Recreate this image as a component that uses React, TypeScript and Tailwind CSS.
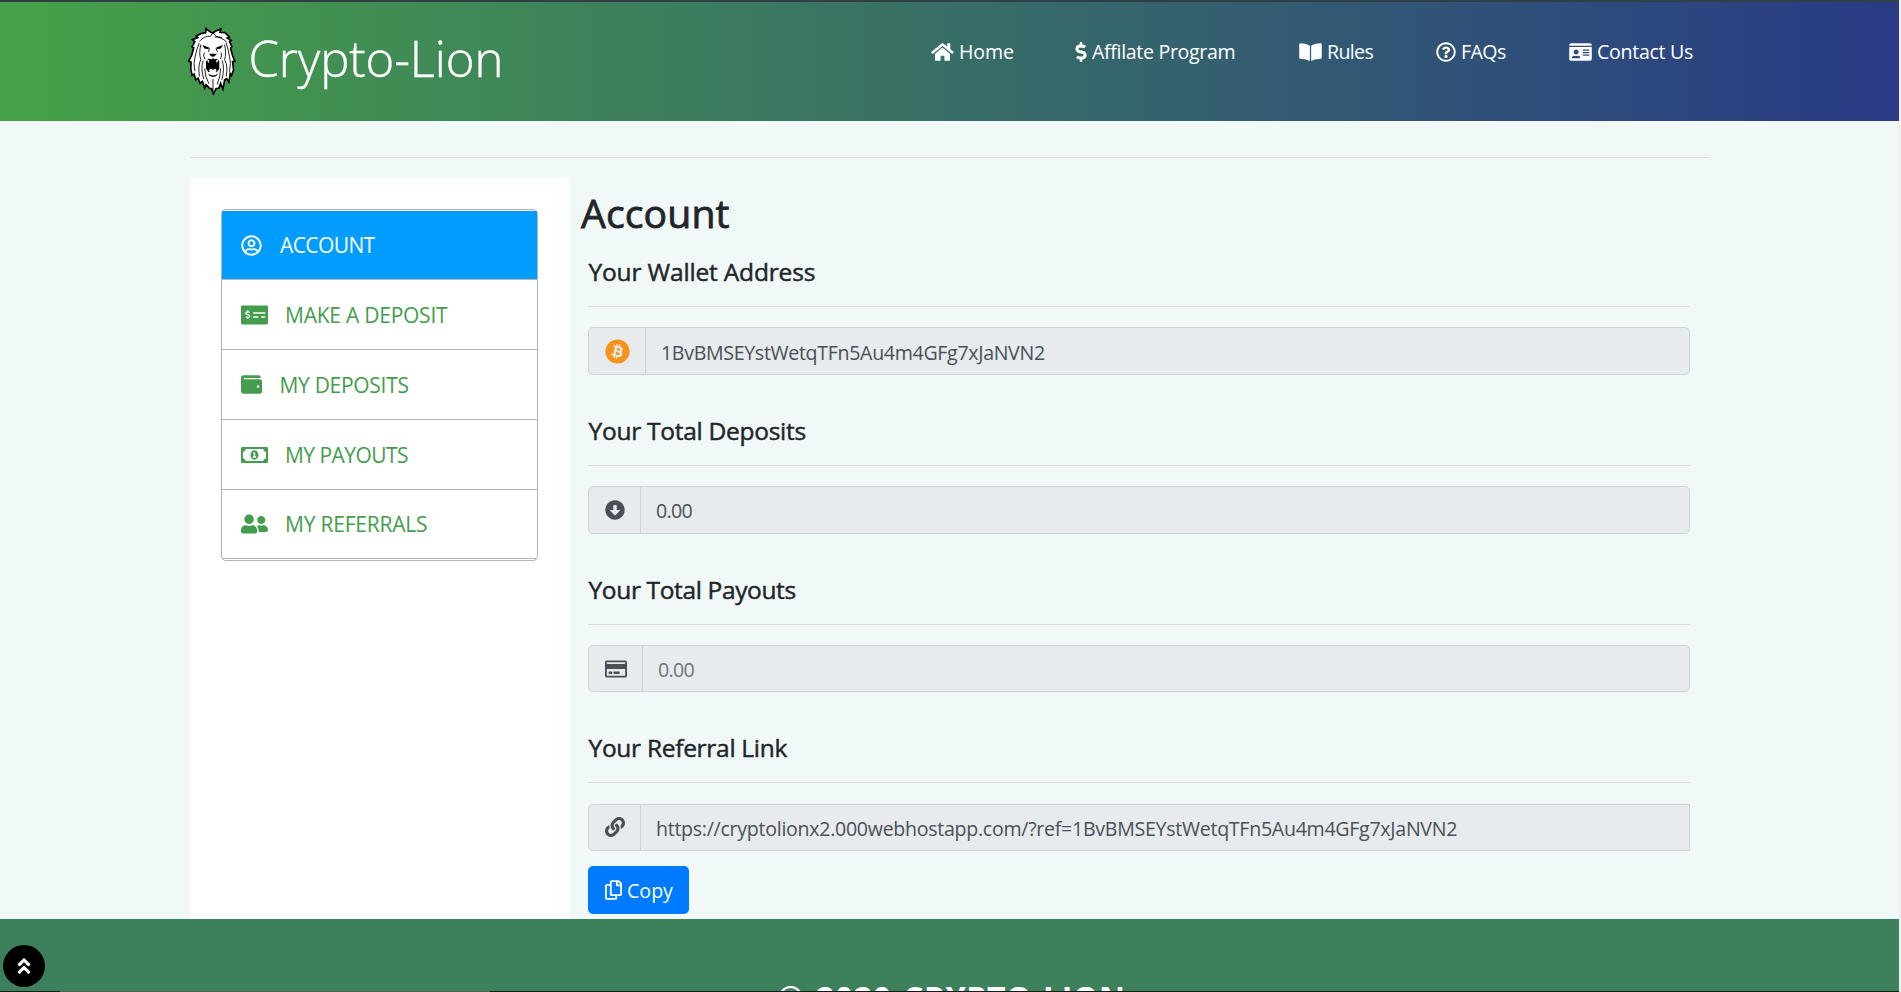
import type { ReactNode } from "react";
import {
  FaHome,
  FaDollarSign,
  FaBookOpen,
  FaRegQuestionCircle,
  FaIdCard,
  FaRegUserCircle,
  FaMoneyCheckAlt,
  FaWallet,
  FaRegMoneyBillAlt,
  FaUserFriends,
  FaBitcoin,
  FaArrowAltCircleDown,
  FaRegCreditCard,
  FaLink,
  FaRegCopy,
  FaAngleDoubleUp,
} from "react-icons/fa";

function LionLogo() {
  return (
    <svg viewBox="20 20 150 205" className="h-[68px] w-[50px] shrink-0" aria-hidden="true">
      <path
        d="M77 25 L90 35 L98 38 L105 33 L122 26 L119 36 L134 37 L147 50 L141 53 L153 60 L148 64 L155 80 L151 84 L157 106 L164 124 L157 124 L160 150 L154 166 L150 160 L146 186 L139 176 L133 180 L128 207 L121 190 L116 204 L107 206 L99 222 L94 206 L88 205 L77 194 L73 204 L66 184 L59 190 L53 174 L46 180 L41 162 L35 166 L31 146 L32 126 L25 124 L34 104 L40 82 L35 80 L43 64 L36 58 L52 52 L47 47 L62 40 L76 37 Z"
        fill="#fff"
        stroke="#000"
        strokeWidth="5"
        strokeLinejoin="miter"
      />
      <g fill="none" stroke="#000" strokeWidth="2.6" strokeLinecap="round">
        <path d="M97 38 L92 46 M99 38 L108 48 L124 52" />
        <path d="M90 48 Q72 46 58 62 M104 50 Q124 50 138 64" />
        <path d="M56 70 Q48 88 44 110 Q38 128 43 152" />
        <path d="M138 68 Q144 88 148 110 Q153 128 148 154" />
        <path d="M61 74 Q55 100 61 118 Q52 138 57 168" />
        <path d="M133 74 Q139 100 133 118 Q144 138 138 168" />
        <path d="M68 122 Q60 146 70 176 M126 122 Q134 146 125 178" />
        <path d="M73 146 Q73 168 85 190 M121 146 Q121 168 111 192" />
        <path d="M98 178 V212" />
        <path d="M71 98 Q68 108 73 116 M123 98 Q126 108 121 116" />
        <path d="M87 84 L85 94 M107 84 L111 94" />
      </g>
      <path d="M66 74 L86 82 L84 87 L72 85 Z M128 74 L108 82 L110 87 L122 85 Z" fill="#000" />
      <path d="M86 101 H110 L103 108 L98 110 L92 108 Z" fill="#000" />
      <path d="M98 110 L96 117 L84 116 L77 123 L77 146 L84 156 H110 L117 146 V123 L110 116 L100 117 Z" fill="#000" />
      <path d="M80 118 L84 130 L87 120 Z M114 118 L110 130 L107 120 Z" fill="#fff" />
      <path d="M86 152 L89 146 L98 149 L106 146 L109 152 L105 159 H91 Z" fill="#fff" />
      <path d="M83 160 Q98 173 113 160 L109 167 Q98 174 87 167 Z" fill="#000" />
    </svg>
  );
}

function NavItem({ icon, label, className }: { icon: ReactNode; label: string; className: string }) {
  return (
    <a className="flex h-7 items-center gap-[5px] text-[19.6px] leading-7 whitespace-nowrap text-white">
      {icon}
      <span className={className}>{label}</span>
    </a>
  );
}

function MenuItem({
  icon,
  label,
  className,
  textClass,
}: {
  icon: ReactNode;
  label: string;
  className: string;
  textClass: string;
}) {
  return (
    <li className={`flex items-center border-b border-[#b5b5b5] pl-[19px] text-[21px] ${className}`}>
      {icon}
      <span className={`pt-0.5 whitespace-nowrap ${textClass}`}>{label}</span>
    </li>
  );
}

function Field({
  title,
  titleClass,
  icon,
  addonClass,
  value,
  valueClass,
  boxClass,
  className,
}: {
  title: string;
  titleClass: string;
  icon: ReactNode;
  addonClass: string;
  value: string;
  valueClass: string;
  boxClass: string;
  className: string;
}) {
  return (
    <section className={className}>
      <h4
        className={`h-[51px] pl-[0.5px] text-[24.5px] leading-[34px] whitespace-nowrap text-[#212529] [-webkit-text-stroke:0.45px_#212529] ${titleClass}`}
      >
        {title}
      </h4>
      <hr className="border-[#d7dddf]" />
      <div className={`flex border border-[#ced4da] bg-[#e8ebee] ${boxClass}`}>
        <div className={`flex items-center border-r border-[#ced4da] pl-4 text-[#495057] ${addonClass}`}>{icon}</div>
        <span className={`pl-[15px] text-[19.6px] whitespace-nowrap ${valueClass}`}>{value}</span>
      </div>
    </section>
  );
}

export default function App() {
  return (
    <div className="flex h-[992px] w-[1901px] overflow-hidden bg-[#f0f0f5] font-['Open_Sans','Noto_Sans',sans-serif]">
      <div className="flex w-[1899px] flex-col bg-[#f1f8f8]">
        <header className="flex h-[121px] shrink-0 border-t-2 border-[#2f3f45] bg-linear-to-r/srgb from-[#46a247] to-[#293a86]">
          <div className="flex w-[931px] pt-[25px] pl-[187px]">
            <LionLogo />
            <span className="pl-[11.5px] text-[49px] leading-[62px] font-light tracking-[-0.1px] whitespace-nowrap text-white [-webkit-text-stroke:0.4px_white]">
              Crypto-Lion
            </span>
          </div>
          <nav className="flex pt-9">
            <div className="w-36">
              <NavItem icon={<FaHome className="h-5 w-[23px]" />} label="Home" className="tracking-[-0.1px]" />
            </div>
            <div className="w-[224px]">
              <NavItem
                icon={<FaDollarSign className="h-5 w-[12px]" />}
                label="Affilate Program"
                className="tracking-[-0.33px]"
              />
            </div>
            <div className="w-[137px]">
              <NavItem icon={<FaBookOpen className="h-5 w-[23px]" />} label="Rules" className="tracking-[-0.65px]" />
            </div>
            <div className="w-[133px]">
              <NavItem icon={<FaRegQuestionCircle className="size-5" />} label="FAQs" className="tracking-[-0.6px]" />
            </div>
            <NavItem icon={<FaIdCard className="h-5 w-[23px]" />} label="Contact Us" className="tracking-[-0.31px]" />
          </nav>
        </header>

        <div className="ml-[190px] w-[1519px] flex-1 pt-9">
          <hr className="border-[#d7dddf]" />
          <div className="mt-5 flex h-[741px]">
            <aside className="w-[380px] bg-white px-[31px] pt-[31px]">
              <ul className="h-[352px] w-[317px] rounded-[5px] border border-[#b5b5b5] pt-px text-[#439d4c]">
                <MenuItem
                  icon={<FaRegUserCircle className="size-[21px]" />}
                  label="ACCOUNT"
                  className="h-[69px] bg-[#009dff] text-white"
                  textClass="pl-[18px] tracking-[-0.6px]"
                />
                <MenuItem
                  icon={<FaMoneyCheckAlt className="h-[22px] w-[27px]" />}
                  label="MAKE A DEPOSIT"
                  className="h-[70px]"
                  textClass="pl-[17px] tracking-[-0.24px]"
                />
                <MenuItem
                  icon={<FaWallet className="size-[21px]" />}
                  label="MY DEPOSITS"
                  className="h-[70px]"
                  textClass="pl-[17.5px] tracking-[-0.3px]"
                />
                <MenuItem
                  icon={<FaRegMoneyBillAlt className="h-[22px] w-[27px]" />}
                  label="MY PAYOUTS"
                  className="h-[70px]"
                  textClass="pl-[17px] tracking-[-0.54px]"
                />
                <MenuItem
                  icon={<FaUserFriends className="h-[22px] w-[27px]" />}
                  label="MY REFERRALS"
                  className="h-[69px]"
                  textClass="pl-[17px] tracking-[-0.21px]"
                />
              </ul>
            </aside>

            <main className="w-[1139px] pl-[11px]">
              <h2 className="h-[77px] pt-[11px] text-[39.2px] leading-12 tracking-[0.1px] text-[#212529] [-webkit-text-stroke:0.8px_#212529]">
                Account
              </h2>
              <div className="w-[1109px] pl-[7px]">
                <Field
                  title="Your Wallet Address"
                  titleClass="tracking-[-0.17px]"
                  icon={<FaBitcoin className="size-[25px] text-[#f7931a]" />}
                  addonClass="w-[57px]"
                  value="1BvBMSEYstWetqTFn5Au4m4GFg7xJaNVN2"
                  valueClass="leading-[49px] tracking-[-0.33px] text-[#495057]"
                  boxClass="mt-5 h-12 rounded-[5px]"
                  className="h-[159px]"
                />
                <Field
                  title="Your Total Deposits"
                  titleClass="tracking-[-0.27px]"
                  icon={<FaArrowAltCircleDown className="size-5" />}
                  addonClass="w-[52px]"
                  value="0.00"
                  valueClass="leading-[47px] tracking-[-0.7px] text-[#495057]"
                  boxClass="mt-5 h-12 rounded-[5px]"
                  className="h-[159px]"
                />
                <Field
                  title="Your Total Payouts"
                  titleClass="tracking-[-0.36px]"
                  icon={<FaRegCreditCard className="h-5 w-[22px]" />}
                  addonClass="w-[54px]"
                  value="0.00"
                  valueClass="leading-[47px] tracking-[-0.7px] text-[#6c757d]"
                  boxClass="mt-5 h-[47px] rounded-[5px]"
                  className="h-[158px]"
                />
                <Field
                  title="Your Referral Link"
                  titleClass="tracking-[-0.29px]"
                  icon={<FaLink className="size-5" />}
                  addonClass="w-[52px] pb-0.5"
                  value="https://cryptolionx2.000webhostapp.com/?ref=1BvBMSEYstWetqTFn5Au4m4GFg7xJaNVN2"
                  valueClass="leading-[47px] tracking-[-0.29px] text-[#495057]"
                  boxClass="mt-[21px] h-[47px] rounded-l-[5px]"
                  className="h-[135px]"
                />
                <button className="flex h-12 w-[101px] items-center gap-[5px] rounded-[5px] bg-[#007bff] pl-[17px] text-[19.6px] text-white">
                  <FaRegCopy className="h-5 w-[17px]" />
                  <span className="pt-0.5">Copy</span>
                </button>
              </div>
            </main>
          </div>
        </div>

        <footer className="relative flex h-[73px] shrink-0 justify-center overflow-hidden bg-[#3d815c] pt-[57px]">
          <span className="h-11 pl-1 text-[32px] leading-11 font-bold tracking-[0.6px] [word-spacing:2.5px] whitespace-nowrap text-white">
            © 2020 CRYPTO-LION
          </span>
          <button className="absolute top-[26px] left-[3px] flex size-[42px] items-center justify-center rounded-full bg-black text-white">
            <FaAngleDoubleUp className="size-5" />
          </button>
          <div className="absolute bottom-0 left-0 flex h-px w-full bg-[#101c17]">
            <div className="ml-[60px] w-[430px] bg-[#4f5f57]" />
          </div>
        </footer>
      </div>
    </div>
  );
}
